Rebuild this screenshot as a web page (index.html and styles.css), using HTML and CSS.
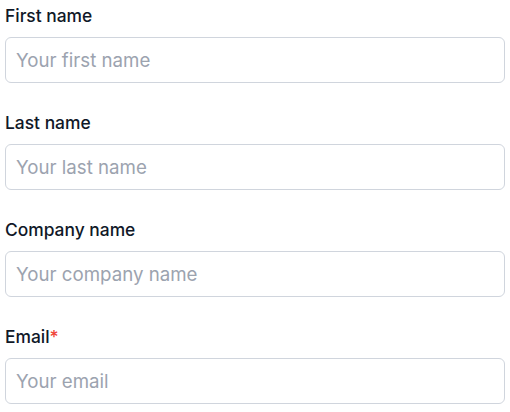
FILE: index.html
```html
<!DOCTYPE html>
<html lang="en">
<head>
<meta charset="utf-8">
<link rel="stylesheet" href="styles.css">
</head>
<body>
<form class="form">
  <div class="field">
    <label class="label" for="first">First name</label>
    <input class="input" id="first" type="text" placeholder="Your first name">
  </div>
  <div class="field">
    <label class="label" for="last">Last name</label>
    <input class="input" id="last" type="text" placeholder="Your last name">
  </div>
  <div class="field">
    <label class="label" for="company">Company name</label>
    <input class="input" id="company" type="text" placeholder="Your company name">
  </div>
  <div class="field">
    <label class="label" for="email">Email<span class="req">*</span></label>
    <input class="input" id="email" type="email" placeholder="Your email">
  </div>
</form>
</body>
</html>
```
FILE: styles.css
```css
* { box-sizing: border-box; }
html, body { margin: 0; padding: 0; background: #ffffff; }
body { font-family: Inter, "Noto Sans", sans-serif; }
.form {
  display: flex;
  flex-direction: column;
  gap: 28px;
  padding: 4px 5px 0 5px;
  width: 510px;
}
.field {
  display: flex;
  flex-direction: column;
  gap: 9px;
}
.label {
  font-size: 17.4px;
  line-height: 24px;
  font-weight: 500;
  color: #101828;
}
.req { color: #f04438; }
.input {
  width: 500px;
  height: 46px;
  border: 1px solid #d0d5dd;
  border-radius: 6px;
  padding: 0 10px;
  font-family: Inter, "Noto Sans", sans-serif;
  font-size: 18.7px;
  color: #101828;
  background: #fff;
  outline: none;
}
.input::placeholder { color: #9ca3af; opacity: 1; }
```
